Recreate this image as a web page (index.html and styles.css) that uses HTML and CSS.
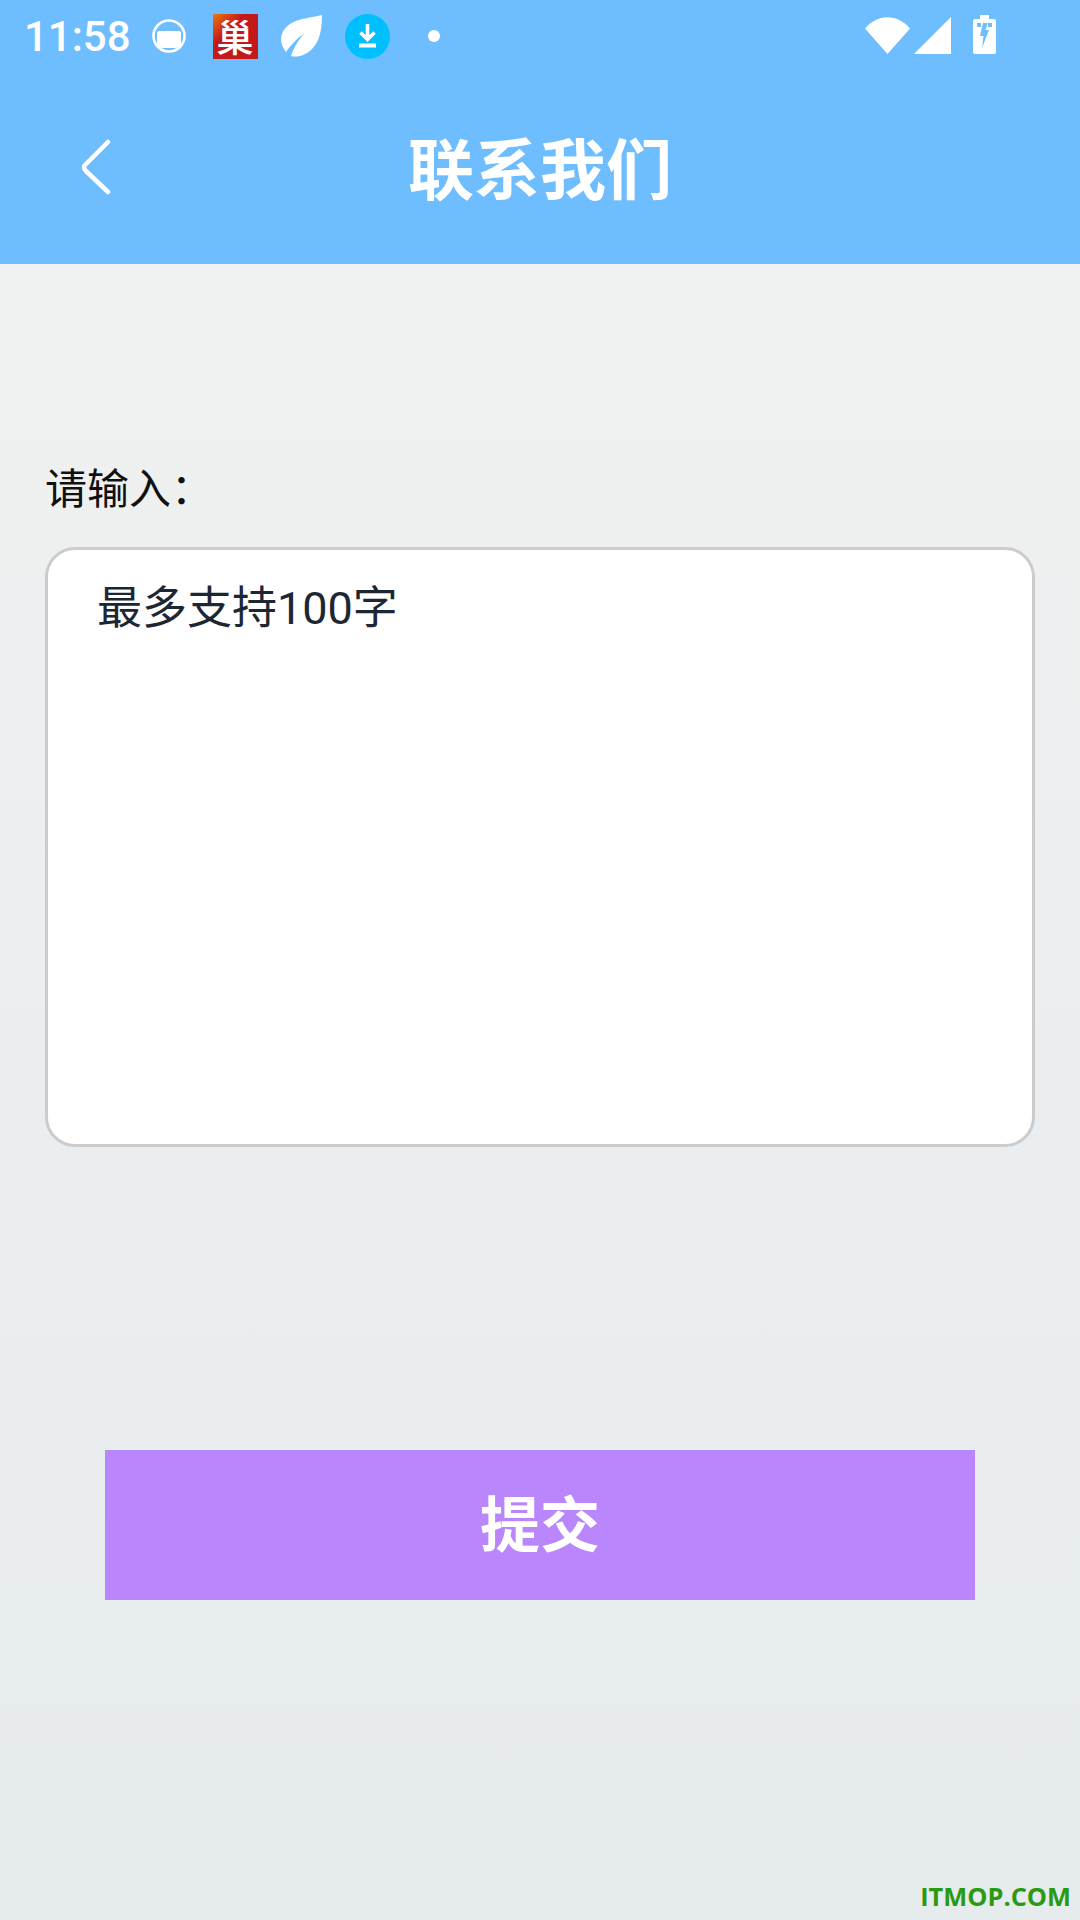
FILE: index.html
```html
<!DOCTYPE html>
<html lang="zh-CN">
<head>
<meta charset="utf-8">
<title>联系我们</title>
<link rel="stylesheet" href="styles.css">
</head>
<body>
<div class="page">
  <header class="top">
    <div class="status">
      <span class="time">11:58</span>
      <svg class="ico ico-circle" viewBox="0 0 36 36"><circle cx="18" cy="18" r="15.500" fill="none" stroke="#fff" stroke-width="2.600"/><path d="M6 15Q6 13 8 13H28Q30 13 30 15V25Q30 29 25 30H11Q6 29 6 25Z" fill="#fff"/></svg>
      <span class="app"><span class="app-glyph">巢</span></span>
      <svg class="ico ico-leaf" viewBox="0 0 42 42"><path d="M42 0C42 14 40 26 32 34C26 40 18 43 11 41C14 32 19 24 25 18C18 22 11 30 6 37C-2 27 0 16 10 9C19 3 31 3 42 0Z" fill="#fff"/></svg>
      <svg class="ico ico-dl" viewBox="0 0 45 45"><circle cx="22.500" cy="22.500" r="22.500" fill="#00bfff"/><path d="M22.500 10V25M15.500 18.500L22.500 25.500L29.500 18.500" fill="none" stroke="#fff" stroke-width="3.600"/><rect x="14" y="29.500" width="17" height="4" fill="#fff"/></svg>
      <span class="dot"></span>
      <span class="spacer"></span>
      <svg class="ico ico-wifi" viewBox="0 0 45 37"><path d="M0 11.500C13 -3.500 32 -3.500 45 11.500L22.500 37Z" fill="#fff"/></svg>
      <svg class="ico ico-signal" viewBox="0 0 37 37"><path d="M37 0V37H0Z" fill="#fff"/></svg>
      <svg class="ico ico-batt" viewBox="0 0 23 39"><path fill-rule="evenodd" d="M7 0H16V4H21Q23 4 23 6V37Q23 39 21 39H2Q0 39 0 37V6Q0 4 2 4H7ZM4 8V12H8V8ZM15 8V12H19V8ZM10 8L7 21H10.500L9 33L16 15H12.500L14.500 8Z" fill="#fff"/></svg>
    </div>
    <div class="nav">
      <svg class="back" viewBox="0 0 32 56"><path d="M29 3L7 25Q3 28 7 32L29 53" fill="none" stroke="#fff" stroke-width="4.500" stroke-linecap="round" stroke-linejoin="round"/></svg>
      <h1 class="title">联系我们</h1>
    </div>
  </header>
  <main class="content">
    <div class="label">请输入：</div>
    <div class="box"><span class="hint">最多支持100字</span></div>
    <div class="btn"><span class="btn-text">提交</span></div>
  </main>
  <div class="mark">ITMOP.COM</div>
</div>
</body>
</html>
```
FILE: styles.css
```css
* { box-sizing: border-box; }
html, body { margin: 0; padding: 0; }
body { font-family: Roboto, "Noto Sans CJK SC", sans-serif; }
.page {
  position: relative;
  width: 1080px;
  height: 1920px;
  overflow: hidden;
  background: linear-gradient(180deg, #eff0f2 0%, #eff1f0 20%, #ebeef0 55%, #e6ebee 100%);
}
.top { height: 264px; background: #6ebdff; }
.status {
  height: 72px;
  display: flex;
  align-items: center;
  padding-left: 24px;
}
.time { color: #fff; font-size: 42px; font-weight: 500; line-height: 72px; margin-right: 20px; padding-top: 1px; }
.ico { display: block; flex: none; }
.ico-circle { width: 36px; height: 36px; margin-right: 26px; margin-top: -1px; }
.app {
  width: 45px; height: 45px; margin-right: 22px; flex: none;
  display: flex; align-items: center; justify-content: center;
  background: linear-gradient(135deg, #ee7a0a 0%, #c4191b 35%);
}
.app-glyph { color: #fff; font-size: 37px; line-height: 45px; font-weight: 500; font-family: "Noto Sans CJK SC", sans-serif; }
.ico-leaf { width: 42px; height: 42px; margin-right: 23px; }
.ico-dl { width: 45px; height: 45px; margin-right: 38px; }
.dot { width: 12px; height: 12px; border-radius: 50%; background: #fff; flex: none; margin-top: -1px; }
.spacer { flex: 1; }
.ico-wifi { width: 45px; height: 37px; margin-right: 4px; margin-top: -1px; }
.ico-signal { width: 37px; height: 37px; margin-right: 22px; margin-top: -1px; }
.ico-batt { width: 23px; height: 39px; margin-right: 84px; margin-top: -3px; }
.nav {
  position: relative;
  height: 192px;
  display: flex;
  align-items: center;
  justify-content: center;
  padding-bottom: 38px;
  padding-top: 32px;
}
.back { position: absolute; left: 79px; top: 67px; width: 32px; height: 56px; }
.title { margin: 0; color: #fff; font-size: 66px; line-height: 80px; font-weight: 700; font-family: "Noto Sans CJK SC", sans-serif; }
.content { padding: 198px 45px 0 45px; }
.label { font-size: 42px; line-height: 48px; color: #111; font-family: "Noto Sans CJK SC", sans-serif; }
.box {
  margin-top: 37px;
  width: 990px;
  height: 600px;
  background: #fff;
  border: 3px solid #ccc;
  border-radius: 30px;
  padding: 30px 0 0 49px;
}
.hint { font-size: 45px; line-height: 58px; color: #1c2733; font-family: Roboto, "Noto Sans CJK SC", sans-serif; }
.btn {
  margin: 303px 0 0 60px;
  width: 870px;
  height: 150px;
  background: #ba86fc;
  display: flex;
  align-items: center;
  justify-content: center;
}
.btn-text {
  color: #fff;
  font-size: 60px;
  line-height: 60px;
  font-weight: 700;
  font-family: "Noto Sans CJK SC", sans-serif;
  margin-bottom: 8px;
}
.mark {
  position: absolute;
  right: 9px;
  bottom: 6px;
  color: #2a9a12;
  font: 700 25.400px/36px "Open Sans", sans-serif;
}
```
